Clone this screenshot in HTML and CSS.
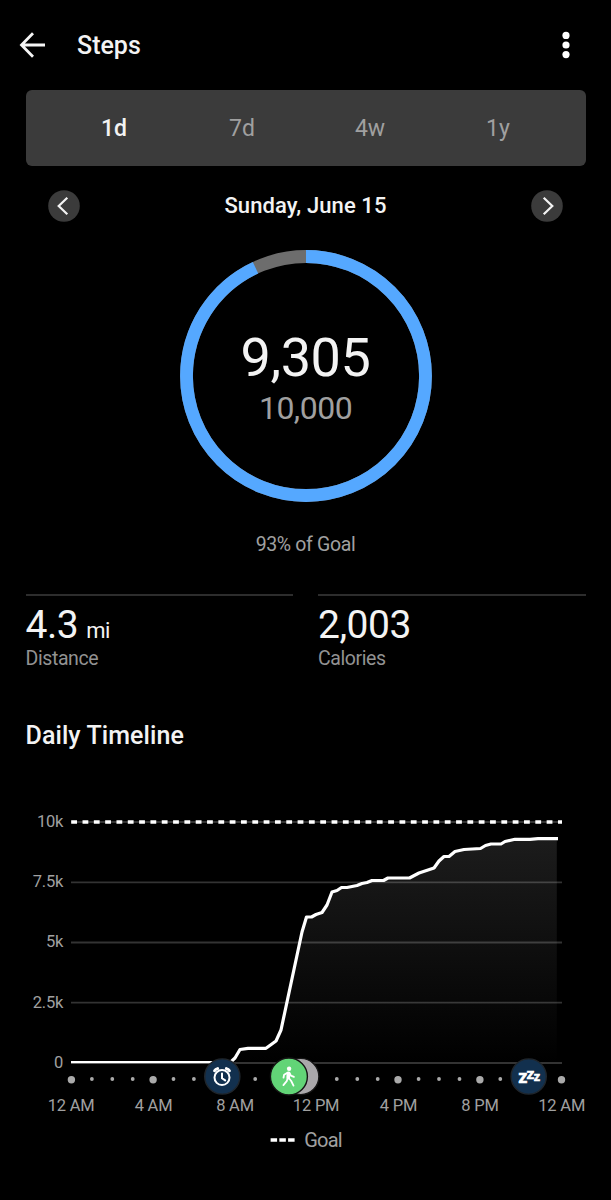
FILE: index.html
```html
<!DOCTYPE html>
<html lang="en">
<head>
<meta charset="utf-8">
<title>Steps</title>
<link rel="stylesheet" href="styles.css">
</head>
<body>
<header class="topbar">
  <svg class="back" width="28" height="28" viewBox="0 0 28 28"><path d="M26 14H3M14 2.2 2.5 14 14 25.8"/></svg>
  <h1 class="title">Steps</h1>
  <svg class="more" width="8" height="28" viewBox="0 0 8 28"><circle cx="4" cy="4.4" r="3.6"/><circle cx="4" cy="14" r="3.6"/><circle cx="4" cy="23.6" r="3.6"/></svg>
</header>
<nav class="tabs"><span class="tab active">1d</span><span class="tab">7d</span><span class="tab">4w</span><span class="tab">1y</span></nav>
<div class="datebar">
  <svg class="step" width="32" height="32" viewBox="0 0 32 32"><circle cx="16" cy="16" r="15.8"/><path d="M19.3 7.7 10.7 16l8.6 8.3"/></svg>
  <span class="date">Sunday, June 15</span>
  <svg class="step" width="32" height="32" viewBox="0 0 32 32"><circle cx="16" cy="16" r="15.8"/><path d="M12.7 7.7 21.3 16l-8.6 8.3"/></svg>
</div>
<section class="goal">
  <div class="ring">
    <svg class="ring-art" width="252" height="252" viewBox="0 0 252 252">
      <circle class="track" cx="126" cy="126" r="119.5"/>
      <circle class="progress" cx="126" cy="126" r="119.5" pathLength="100" stroke-dasharray="93.05 100" transform="rotate(-90 126 126)"/>
    </svg>
    <div class="ring-text"><span class="count">9,305</span><span class="target">10,000</span></div>
  </div>
  <p class="percent">93% of Goal</p>
</section>
<section class="stats">
  <div class="stat"><div class="value"><span>4.3</span><span class="unit">mi</span></div><div class="label">Distance</div></div>
  <div class="stat"><div class="value"><span>2,003</span></div><div class="label">Calories</div></div>
</section>
<h2 class="heading">Daily Timeline</h2>
<svg class="chart" width="611" height="370" viewBox="0 790 611 370">
  <defs>
    <linearGradient id="fill" x1="0" y1="838" x2="0" y2="1063" gradientUnits="userSpaceOnUse"><stop offset="0" stop-color="#1c1c1c"/><stop offset="1" stop-color="#000"/></linearGradient>
    <clipPath id="plot"><rect x="71" y="815" width="491" height="248.2"/></clipPath>
  </defs>
  <path class="area" fill="url(#fill)" d="M71 1062.5H230L235 1058 240 1049 248 1048H266L276 1041 281 1030 302 932 306.5 917H311.5L316 914.5 322 912.5 327 905 332 892 337 890.5 341.5 887.5H347L357 885.5 362 883.5 367 882.5 372 880.5H383.5L388 878H409.5L419 873 434 868 439 861 444 856.5H449L455 851.5 464 849.5 480.5 848.5 485.5 845.5 491 844H501L505 841.5 515 839H556.8V1062.5Z"/>
  <path class="grid" d="M71 822H562M71 882.3H562M71 942.5H562M71 1002.7H562M71 1063H562"/>
  <path class="goal-line" d="M71.2 822H562"/>
  <path class="line" clip-path="url(#plot)" d="M71 1062.7H230L235 1058 240 1049.5 248 1048.3H266L276 1041 281 1030 302 932 306.5 917H311.5L316 914.5 322 912.5 327 905 332 892 337 890.5 341.5 887.5H347L357 885.5 362 883.5 367 882.5 372 880.5H383.5L388 878H409.5L419 873 434 868 439 861 444 856.5H449L455 851.5 464 849.5 480.5 848.5 485.5 845.5 491 844H501L505 841.5 515 839.3H530L538 838.7H558"/>
  <g class="axis y"><text x="63.2" y="826.5">10k</text><text x="63.2" y="887">7.5k</text><text x="63.2" y="947">5k</text><text x="63.2" y="1007.5">2.5k</text><text x="63.2" y="1067.5">0</text></g>
  <path class="minor" d="M91.9 1079h0M112.3 1079h0M132.7 1079h0M173.5 1079h0M193.9 1079h0M255.2 1079h0M336.8 1079h0M357.3 1079h0M377.7 1079h0M418.6 1079h0M439 1079h0M459.5 1079h0M500.3 1079h0"/>
  <path class="major" d="M71.4 1079.7h0M153.1 1079.7h0M398 1079.7h0M479.9 1079.7h0M561.5 1079.7h0"/>
  <g class="axis x"><text x="71.1" y="1111.3">12 AM</text><text x="153.5" y="1111.3">4 AM</text><text x="235" y="1111.3">8 AM</text><text x="316.1" y="1111.3">12 PM</text><text x="398.4" y="1111.3">4 PM</text><text x="480" y="1111.3">8 PM</text><text x="561.7" y="1111.3">12 AM</text></g>
  <circle class="badge navy" cx="222.3" cy="1076.5" r="17.6"/>
  <g class="clock" transform="translate(222 1077.6)"><circle r="7.5"/><path d="M0-4V.6L3.2 2.8"/><path class="bells" d="M-7.4-6.9Q-6.4-8.5-4.4-9M7.4-6.9Q6.4-8.5 4.4-9"/></g>
  <circle class="badge gray" cx="300.8" cy="1076.5" r="18.1"/>
  <circle class="badge green" cx="288.9" cy="1076.5" r="18.5"/>
  <g class="walker" transform="translate(288.6 1076.7)"><circle class="head" cx=".5" cy="-7.9" r="2.2"/><path class="torso" d="M-.2-3.3-.4 1"/><path d="M-1.2-4-4.5-2-5.1 1M.8-4 2.3-1 5.3.2M-.8 1-1.900 4.5-5.2 8.4M0 1 2.6 4.3 4.900 8.9"/></g>
  <circle class="badge navy" cx="528.7" cy="1076.5" r="17.6"/>
  <g class="zzz"><text x="518.3" y="1082.7" font-size="18">z</text><text x="526.5" y="1078.5" font-size="15.5">z</text><text x="533.7" y="1080.7" font-size="12.5">z</text></g>
  <path class="legend-line" d="M270.6 1140h24"/>
  <text class="legend" x="304.3" y="1147">Goal</text>
</svg>
</body>
</html>
```
FILE: styles.css
```css
* { box-sizing: border-box; margin: 0; }
body { background: #000; color: #f3f3f3; font-family: Roboto, "Liberation Sans", sans-serif; width: 611px; height: 1200px; overflow: hidden; }
svg { display: block; fill: none; }
.topbar { height: 90px; padding: 0 41px 0 19px; display: flex; align-items: center; }
.back path { stroke: #f5f5f5; stroke-width: 2.8; }
.title { margin-left: 30px; padding-top: 2px; font-size: 25px; font-weight: 500; line-height: 30px; }
.more { margin-left: auto; fill: #fff; }
.tabs { height: 76px; margin: 0 25.5px; padding: 0 25px 0 26px; border-radius: 6px; background: #3b3b3b; display: grid; grid-template-columns: repeat(4, 128px); justify-content: center; align-items: center; text-align: center; font-size: 23px; color: #a0a0a0; }
.active { font-weight: 500; color: #f3f3f3; }
.datebar { height: 78px; padding: 1px 47.5px 0; display: flex; align-items: center; justify-content: space-between; }
.step circle { fill: #3b3b3b; }
.step path { stroke: #f3f3f3; stroke-width: 2.2; }
.date { font-size: 22px; font-weight: 500; letter-spacing: .1px; }
.goal { display: flex; flex-direction: column; align-items: center; padding-top: 6px; }
.ring { display: grid; place-items: center; }
.ring-art, .ring-text { grid-area: 1 / 1; }
.track, .progress { stroke-width: 12.8; stroke: #6d6d6d; }
.progress { stroke: #55a8ff; }
.ring-text { display: flex; flex-direction: column; align-items: center; padding-top: 7px; }
.count { font-size: 54px; line-height: 58px; letter-spacing: -.4px; }
.target { font-size: 32px; line-height: 43px; letter-spacing: -.5px; color: #a0a0a0; }
.percent { margin-top: 31px; font-size: 19.5px; line-height: 24px; letter-spacing: -.35px; color: #a0a0a0; }
.stats { margin: 37px 25.5px 0; display: grid; grid-template-columns: 1fr 1fr; gap: 25px; }
.stat { border-top: 2px solid #2d2d2d; padding-top: 6px; }
.value { display: flex; align-items: baseline; gap: 8px; height: 46px; font-size: 39px; line-height: 46px; letter-spacing: -.5px; }
.unit { font-size: 22px; line-height: 24px; letter-spacing: -.3px; }
.label { font-size: 19.5px; line-height: 22px; letter-spacing: -.4px; color: #929292; }
.heading { margin: 51px 25.5px 39px; font-size: 25px; line-height: 30px; font-weight: 500; letter-spacing: .08px; }
.grid { stroke: #fff; stroke-opacity: .2; stroke-width: 1.8; }
.goal-line { stroke: #fff; stroke-width: 3.6; stroke-dasharray: 5.8 5.52; }
.line { stroke: #fff; stroke-width: 3.2; stroke-linejoin: round; }
.axis { font-size: 16.5px; letter-spacing: -.2px; fill: #a0a0a0; }
.y { text-anchor: end; }
.x { text-anchor: middle; }
.minor, .major { stroke: #aaa; stroke-linecap: round; stroke-width: 3.8; }
.major { stroke-width: 7.4; }
.badge { stroke: #151515; stroke-width: 1.4; }
.navy { fill: #12304e; stroke: #20262c; }
.gray { fill: #aaa8ab; }
.green { fill: #62d477; }
.clock { stroke: #fff; stroke-width: 2; stroke-linecap: round; }
.bells { stroke-width: 3; }
.walker { stroke: #fff; stroke-width: 1.8; stroke-linecap: round; stroke-linejoin: round; }
.head { fill: #fff; stroke: none; }
.torso { stroke-width: 3.6; }
.zzz { fill: #fff; stroke: #fff; stroke-width: .5; font-weight: 700; }
.legend-line { stroke: #fff; stroke-width: 3.6; stroke-dasharray: 6.5 2.25; }
.legend { font-size: 20px; letter-spacing: -.8px; fill: #a0a0a0; }
```
